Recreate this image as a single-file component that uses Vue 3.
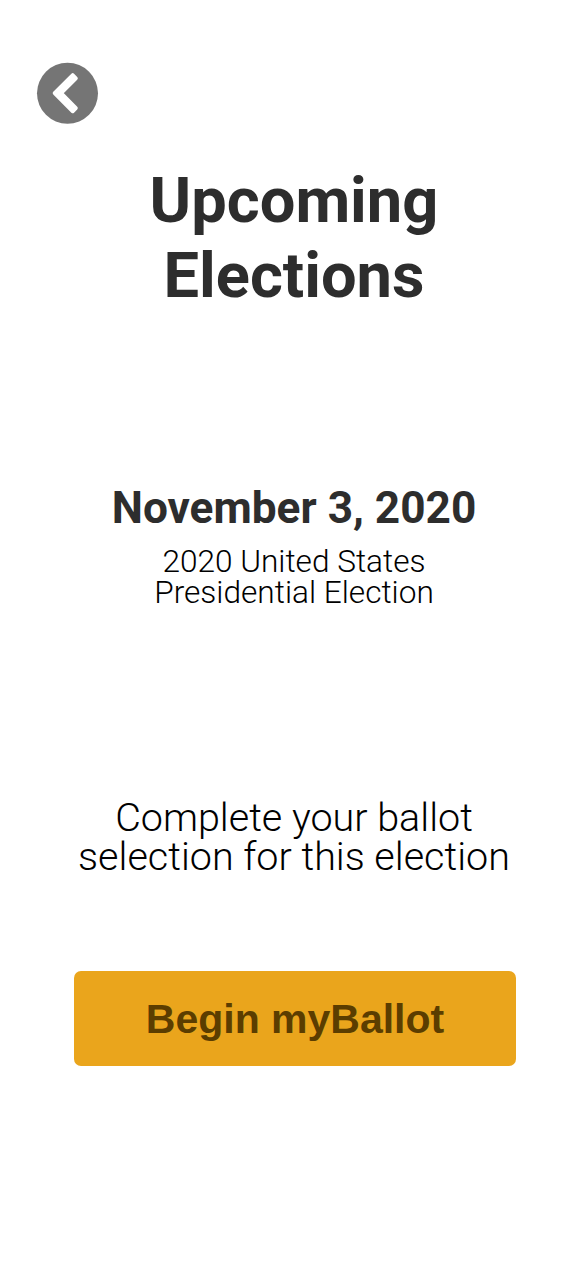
<script setup>
const title = ['Upcoming', 'Elections']
const election = ['2020 United States', 'Presidential Election']
const prompt = ['Complete your ballot', 'selection for this election']
</script>

<template>
  <main class="screen">
    <button class="back" aria-label="Back">
      <svg viewBox="0 0 61 61" width="61" height="61">
        <circle cx="30.5" cy="30.3" r="30.5" fill="#757575" />
        <path d="M17.6 30.2 L35.7 12.1 L38.9 15.3 L24.1 30.2 L38.9 45.1 L35.7 48.3 Z" fill="#fff" stroke="#fff" stroke-width="3.8" stroke-linejoin="round" />
      </svg>
    </button>
    <h1 class="title"><span v-for="l in title" :key="l">{{ l }}</span></h1>
    <h2 class="date">November 3, 2020</h2>
    <p class="name"><span v-for="l in election" :key="l">{{ l }}</span></p>
    <p class="prompt"><span v-for="l in prompt" :key="l">{{ l }}</span></p>
    <button class="begin">Begin myBallot</button>
  </main>
</template>

<style>
body { margin: 0; background: #fff; }
</style>
<style scoped>
.screen { box-sizing: border-box; width: 588px; height: 1274px; padding-top: 63px; display: flex; flex-direction: column; align-items: center; background: #fff; font-family: Roboto, sans-serif; text-align: center; overflow: hidden; }
h1, h2, p { margin: 0; }
span { display: block; white-space: nowrap; }
button { border: 0; padding: 0; }
.back { align-self: flex-start; margin-left: 37px; width: 61px; height: 61px; background: none; }
.back svg { display: block; overflow: visible; }
.title { margin-top: 39px; font-size: 63.2px; line-height: 75px; font-weight: 700; color: #2d2d2d; }
.date { margin-top: 169px; font-size: 44.2px; line-height: 52px; font-weight: 700; color: #2d2d2d; white-space: nowrap; }
.name { margin-top: 12px; font-size: 31.6px; line-height: 31px; font-weight: 300; color: #000; }
.prompt { margin-top: 190px; font-size: 39.5px; line-height: 39px; font-weight: 300; color: #000; }
.begin { box-sizing: border-box; margin: 95px 0 0 2px; width: 442px; height: 95px; padding-top: 2px; border-radius: 7px; background: #eaa51c; color: #5b3d00; font: 700 41px "Liberation Sans", Arial, sans-serif; }
</style>
